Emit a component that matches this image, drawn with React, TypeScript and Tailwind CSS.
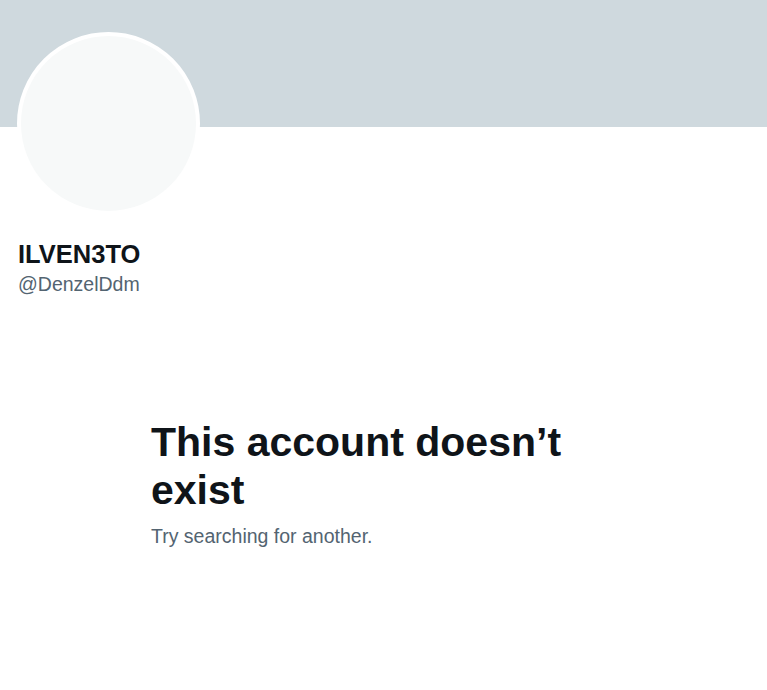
export default function App() {
  return (
    <div
      className="min-h-[690px] w-full bg-white"
      style={{ fontFamily: '"Liberation Sans", Arial, sans-serif' }}
    >
      {/* header banner */}
      <div className="h-[127px] w-full bg-[#cfd9de]" />

      {/* avatar overlapping the banner */}
      <div className="relative -mt-[95px] ml-[17px] h-[183px] w-[183px] rounded-full border-4 border-white bg-[#f7f9f9]" />

      {/* profile identity */}
      <div className="ml-[18px] mt-[24px]">
        <div className="text-[25.5px] font-bold leading-[30px] text-[#0f1419]">ILVEN3TO</div>
        <div className="mt-[3px] text-[19.5px] leading-[24px] text-[#536471]">@DenzelDdm</div>
      </div>

      {/* empty state */}
      <div className="ml-[151px] mt-[122px] w-[440px]">
        <h1 className="text-[41px] font-bold leading-[48px] text-[#0f1419]">
          This account doesn’t exist
        </h1>
        <p className="mt-[10px] text-[19.5px] leading-[24px] text-[#536471]">
          Try searching for another.
        </p>
      </div>
    </div>
  );
}
